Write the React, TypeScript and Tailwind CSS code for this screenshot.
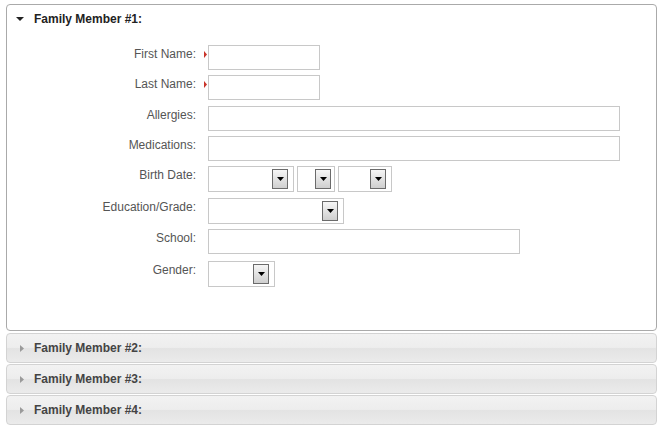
const font = { fontFamily: '"Liberation Sans", Arial, sans-serif' };

function Marker() {
  return (
    <div className="w-[12px] h-[18px] flex items-center justify-end pr-[1px]">
      <svg width="3" height="7" viewBox="0 0 3 7">
        <path d="M0 0 L3 3.5 L0 7 Z" fill="#c9342a" />
      </svg>
    </div>
  );
}

function TextBox({ width }: { width: string }) {
  return <div className={`${width} h-[25px] border border-[#c8c8c8] bg-white`} />;
}

function Select({ width, pr = 'pr-[5px]' }: { width: string; pr?: string }) {
  return (
    <div className={`${width} h-[26px] border border-[#c8c8c8] bg-white flex items-center justify-end ${pr}`}>
      <div className="w-[16px] h-[20px] border border-[#6b6b6b] bg-[linear-gradient(#f6f6f6,#cfcfcf)] flex items-center justify-center">
        <svg width="7" height="4" viewBox="0 0 7 4">
          <path d="M0 0 H7 L3.5 4 Z" fill="#000" />
        </svg>
      </div>
    </div>
  );
}

function Row({
  label,
  required,
  mt,
  children,
}: {
  label: string;
  required?: boolean;
  mt: string;
  children: React.ReactNode;
}) {
  return (
    <div className={`flex items-start ${mt}`}>
      <div className="w-[189px] text-right text-[12px] leading-[16px] pt-[1px] text-[#555]">{label}</div>
      {required ? <Marker /> : <div className="w-[12px]" />}
      {children}
    </div>
  );
}

function Collapsed({ title, mt }: { title: string; mt: string }) {
  return (
    <div className={`${mt} h-[30px] border border-[#d3d3d3] rounded-[4px] bg-[linear-gradient(#f2f2f2_0%,#ededed_48%,#e3e3e3_52%,#ebebeb_100%)] flex items-center pl-[13px]`}>
      <svg width="4" height="7" viewBox="0 0 4 7" className="mr-[10px]">
        <path d="M0 0 L4 3.5 L0 7 Z" fill="#9a9a9a" />
      </svg>
      <span className="text-[12px] font-bold text-[#444]">{title}</span>
    </div>
  );
}

export default function App() {
  return (
    <div className="w-[663px] h-[432px] bg-white pt-[4px] pl-[6px]" style={font}>
      <div className="w-[651px]">
        <div className="border border-[#aaa] rounded-[4px] bg-white">
          <div className="h-[27px] flex items-center pl-[9px] pt-[1px]">
            <svg width="8" height="4" viewBox="0 0 8 4" className="mr-[10px]">
              <path d="M0 0 H8 L4 4 Z" fill="#222" />
            </svg>
            <span className="text-[12px] font-bold text-[#222]">Family Member #1:</span>
          </div>
          <div className="pt-[13px] pb-[43px]">
            <Row label="First Name:" required mt="mt-0">
              <TextBox width="w-[112px]" />
            </Row>
            <Row label="Last Name:" required mt="mt-[5px]">
              <TextBox width="w-[112px]" />
            </Row>
            <Row label="Allergies:" mt="mt-[6px]">
              <TextBox width="w-[412px]" />
            </Row>
            <Row label="Medications:" mt="mt-[5px]">
              <TextBox width="w-[412px]" />
            </Row>
            <Row label="Birth Date:" mt="mt-[5px]">
              <div className="flex gap-[3px]">
                <Select width="w-[86px]" />
                <Select width="w-[38px]" pr="pr-[3px]" />
                <Select width="w-[54px]" />
              </div>
            </Row>
            <Row label="Education/Grade:" mt="mt-[6px]">
              <Select width="w-[136px]" />
            </Row>
            <Row label="School:" mt="mt-[5px]">
              <TextBox width="w-[312px]" />
            </Row>
            <Row label="Gender:" mt="mt-[7px]">
              <Select width="w-[67px]" />
            </Row>
          </div>
        </div>
        <Collapsed title="Family Member #2:" mt="mt-[2px]" />
        <Collapsed title="Family Member #3:" mt="mt-[1px]" />
        <Collapsed title="Family Member #4:" mt="mt-[1px]" />
      </div>
    </div>
  );
}
